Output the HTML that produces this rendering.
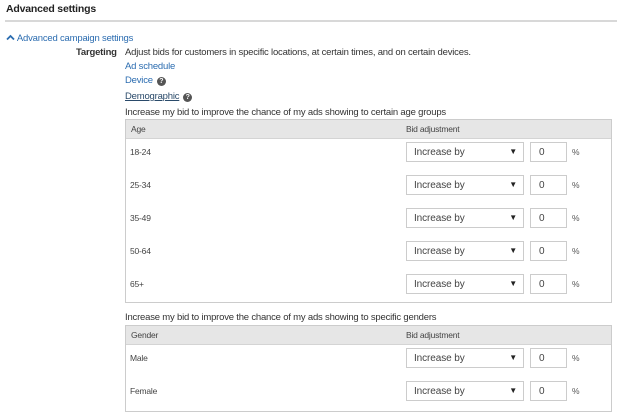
<!DOCTYPE html>
<html><head><meta charset="utf-8"><style>
*{margin:0;padding:0;box-sizing:border-box}
body{width:617px;height:416px;overflow:hidden;background:#fff;font-family:"Liberation Sans",Arial,sans-serif;color:#333;font-size:9.5px;letter-spacing:-0.2px;position:relative}
.a{position:absolute;white-space:nowrap}
.lnk{color:#2b6cb0}
.q{display:inline-block;width:9px;height:9px;border-radius:50%;background:#555;color:#fff;font-size:7px;font-weight:bold;text-align:center;line-height:9px;vertical-align:0px;margin-left:4px;letter-spacing:0}
.tbl{position:absolute;left:125px;width:487px;border:1px solid #ccc;background:#fff}
.hd{position:absolute;left:0;top:0;right:0;height:19px;background:#e6e6e6;border-bottom:1px solid #d4d4d4}
.hd span{position:absolute;top:4px;font-size:8.5px;color:#444}
.sel{position:absolute;left:406px;width:118px;height:20px;border:1px solid #ccc;background:#fff}
.sel span{position:absolute;left:7px;top:4px;font-size:10px;color:#444;letter-spacing:-0.1px}
.sel i{position:absolute;right:6px;top:4px;font-style:normal;font-size:8px;color:#222}
.inp{position:absolute;left:530px;width:37px;height:20px;border:1px solid #ccc;background:#fff}
.inp span{position:absolute;left:8px;top:4px;font-size:10px;color:#444}
.pc{position:absolute;left:572px;font-size:8.5px;color:#555}
.rl{position:absolute;left:130px;font-size:8.5px;color:#444}
</style></head><body>
<div class="a" style="left:6px;top:3px;font-size:10.5px;font-weight:bold;color:#222">Advanced settings</div>
<div class="a" style="left:5px;top:20px;width:612px;height:2px;background:#d8d8d8"></div>
<div class="a lnk" style="left:6px;top:33px"><svg width="9" height="7" viewBox="0 0 9 7" style="vertical-align:0px"><path d="M1 5.5 L4.5 2 L8 5.5" stroke="#2b6cb0" stroke-width="1.8" fill="none"/></svg> Advanced campaign settings</div>
<div class="a" style="left:76px;top:47px;font-weight:bold;color:#333">Targeting</div>
<div class="a" style="left:125px;top:47px">Adjust bids for customers in specific locations, at certain times, and on certain devices.</div>
<div class="a lnk" style="left:125px;top:61px">Ad schedule</div>
<div class="a lnk" style="left:125px;top:75px">Device<span class="q">?</span></div>
<div class="a" style="left:125px;top:91px;color:#333"><span style="text-decoration:underline;color:#2a4a6a">Demographic</span><span class="q">?</span></div>
<div class="a" style="left:125px;top:107px">Increase my bid to improve the chance of my ads showing to certain age groups</div>

<div class="tbl" style="top:119px;height:184px"><div class="hd"><span style="left:5px">Age</span><span style="left:280px">Bid adjustment</span></div></div>
<div class="a" style="left:125px;top:312px">Increase my bid to improve the chance of my ads showing to specific genders</div>
<div class="tbl" style="top:325px;height:87px"><div class="hd"><span style="left:5px">Gender</span><span style="left:280px">Bid adjustment</span></div></div>

<div class="rl" style="top:147px">18-24</div>
<div class="sel" style="top:142px"><span>Increase by</span><i>▼</i></div><div class="inp" style="top:142px"><span>0</span></div><div class="pc" style="top:147px">%</div>
<div class="rl" style="top:180px">25-34</div>
<div class="sel" style="top:175px"><span>Increase by</span><i>▼</i></div><div class="inp" style="top:175px"><span>0</span></div><div class="pc" style="top:180px">%</div>
<div class="rl" style="top:213px">35-49</div>
<div class="sel" style="top:208px"><span>Increase by</span><i>▼</i></div><div class="inp" style="top:208px"><span>0</span></div><div class="pc" style="top:213px">%</div>
<div class="rl" style="top:246px">50-64</div>
<div class="sel" style="top:241px"><span>Increase by</span><i>▼</i></div><div class="inp" style="top:241px"><span>0</span></div><div class="pc" style="top:246px">%</div>
<div class="rl" style="top:279px">65+</div>
<div class="sel" style="top:274px"><span>Increase by</span><i>▼</i></div><div class="inp" style="top:274px"><span>0</span></div><div class="pc" style="top:279px">%</div>

<div class="rl" style="top:353px">Male</div>
<div class="sel" style="top:348px"><span>Increase by</span><i>▼</i></div><div class="inp" style="top:348px"><span>0</span></div><div class="pc" style="top:353px">%</div>
<div class="rl" style="top:386px">Female</div>
<div class="sel" style="top:381px"><span>Increase by</span><i>▼</i></div><div class="inp" style="top:381px"><span>0</span></div><div class="pc" style="top:386px">%</div>
</body></html>
